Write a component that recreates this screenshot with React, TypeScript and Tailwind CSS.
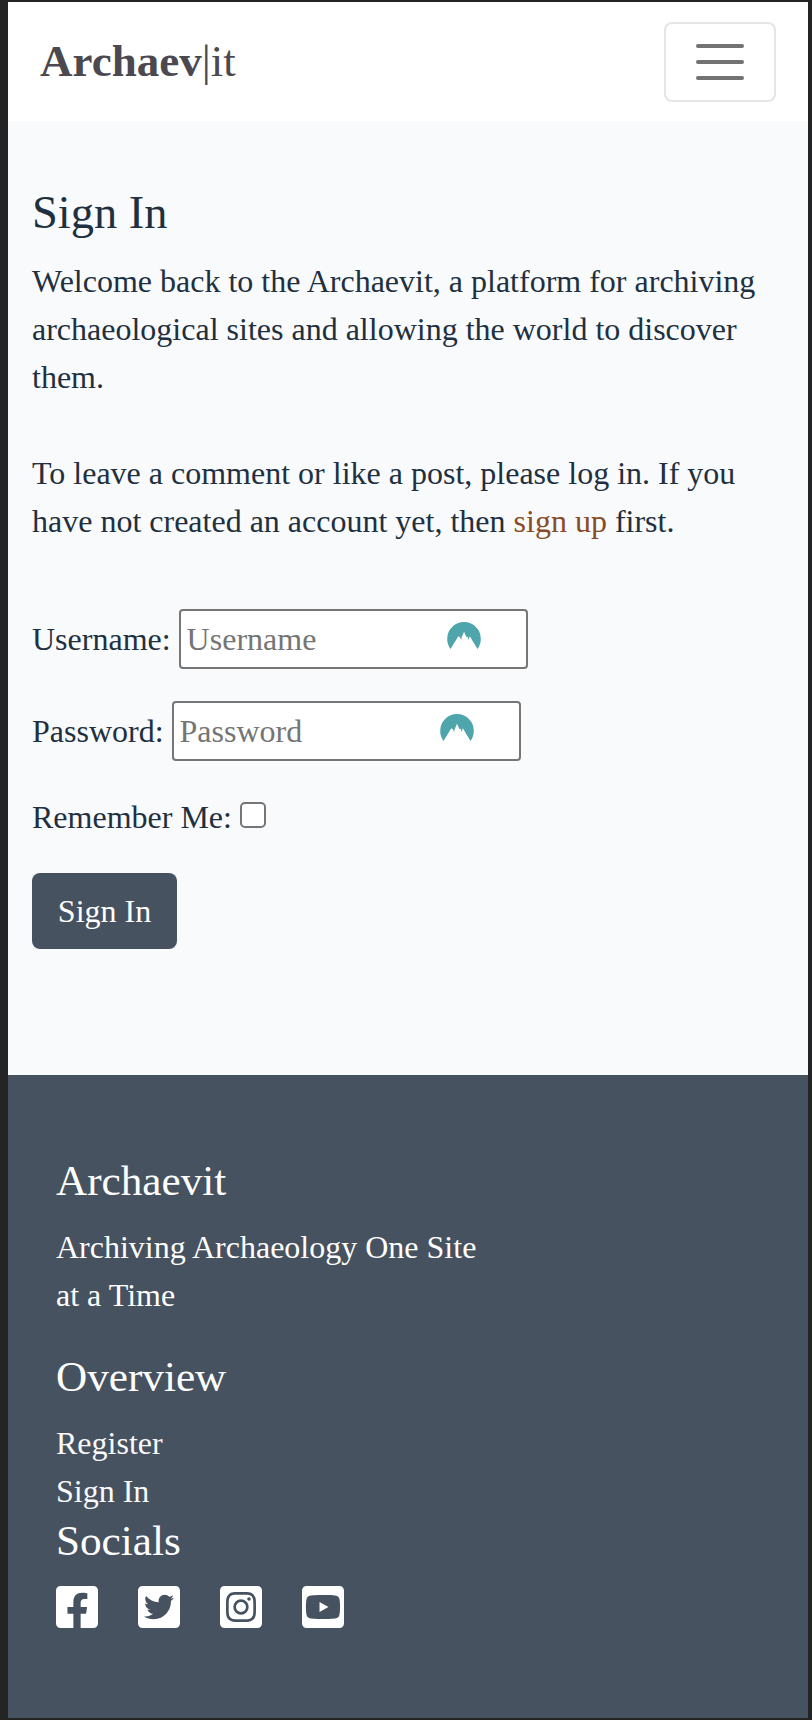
import React from "react";
import {
  FaFacebookSquare,
  FaTwitterSquare,
  FaInstagramSquare,
  FaYoutubeSquare,
} from "react-icons/fa";

function MountainMark() {
  return (
    <svg width="34" height="27" viewBox="0 0 34 27" className="block">
      <path
        fill="#4ea5ab"
        d="M3.500 27A17 17 0 0 1 .2 16.800A16.800 16.800 0 0 1 33.800 16.800A17 17 0 0 1 30.500 27L22.800 14.300L21.600 17.900L20.600 14.800L19.400 15L17 9.700L14.800 15L14.200 18.200L13.200 15.400L11.300 14.300Z"
      />
    </svg>
  );
}

function Field({ label, type }: { label: string; type: string }) {
  return (
    <label className="flex items-center">
      <span className="mr-[8px]">{label}:</span>
      <span className="flex h-[60px] w-[349px] rounded-[4px] border-2 border-[#767676] bg-white px-[6px]">
        <input
          type={type}
          placeholder={label}
          className="w-[260px] bg-transparent outline-none placeholder:text-[#757575]"
        />
        <span className="mt-[11px]">
          <MountainMark />
        </span>
      </span>
    </label>
  );
}

export default function App() {
  return (
    <div className="h-[1720px] w-[812px] bg-[#242425] pt-[2px] pr-[4px] pb-[2px] pl-[8px] font-['Liberation_Serif',serif] text-[32px] leading-[48px] text-[#213040]">
      <div className="flex h-full flex-col bg-[#f9fafc]">
        <header className="flex h-[119px] shrink-0 items-center justify-between bg-white pr-[32px] pl-[32px]">
          <a className="pb-[2px] text-[45px] text-[#4b494f]">
            <b>Archaev</b>|it
          </a>
          <button className="flex h-[80px] w-[112px] flex-col items-center justify-center gap-[12px] rounded-[8px] border-2 border-[#e5e5e5]">
            <span className="h-[4px] w-[48px] rounded-full bg-[#737373]" />
            <span className="h-[4px] w-[48px] rounded-full bg-[#737373]" />
            <span className="h-[4px] w-[48px] rounded-full bg-[#737373]" />
          </button>
        </header>
        <main className="flex h-[954px] shrink-0 flex-col items-start px-[24px] pt-[63.500px]">
          <h1 className="mb-[17px] text-[46.4px] leading-[55.68px]">Sign In</h1>
          <p className="whitespace-nowrap">
            Welcome back to the Archaevit, a platform for archiving
            <br />
            archaeological sites and allowing the world to discover
            <br />
            them.
          </p>
          <p className="mt-[48px] mb-[64px] whitespace-nowrap">
            To leave a comment or like a post, please log in. If you
            <br />
            have not created an account yet, then{" "}
            <a className="text-[#8a4b25]">sign up</a> first.
          </p>
          <form className="flex flex-col items-start">
            <Field label="Username" type="text" />
            <div className="mt-[32px]">
              <Field label="Password" type="password" />
            </div>
            <label className="mt-[32px] flex items-center">
              Remember Me:
              <input
                type="checkbox"
                className="mb-[4px] ml-[8px] h-[26px] w-[26px] appearance-none rounded-[5px] border-2 border-[#767676] bg-white"
              />
            </label>
            <button
              type="button"
              className="mt-[32px] h-[76px] w-[145px] rounded-[8px] bg-[#475260] text-white"
            >
              Sign In
            </button>
          </form>
        </main>
        <footer className="flex-1 bg-[#475260] pt-[80px] pl-[48px] text-white">
          <h2 className="mb-[16px] text-[43.2px] leading-[51.84px]">Archaevit</h2>
          <p className="mb-[32px]">
            Archiving Archaeology One Site
            <br />
            at a Time
          </p>
          <h2 className="mb-[16.500px] text-[43.2px] leading-[51.84px]">Overview</h2>
          <ul className="text-[#f9fafc]">
            <li>Register</li>
            <li>Sign In</li>
          </ul>
          <h2 className="mb-[15.700px] text-[43.2px] leading-[51.84px]">Socials</h2>
          <div className="flex gap-[40px]">
            <FaFacebookSquare className="h-[48px] w-[42px]" />
            <FaTwitterSquare className="h-[48px] w-[42px]" />
            <FaInstagramSquare className="h-[48px] w-[42px]" />
            <FaYoutubeSquare className="h-[48px] w-[42px]" />
          </div>
        </footer>
      </div>
    </div>
  );
}
